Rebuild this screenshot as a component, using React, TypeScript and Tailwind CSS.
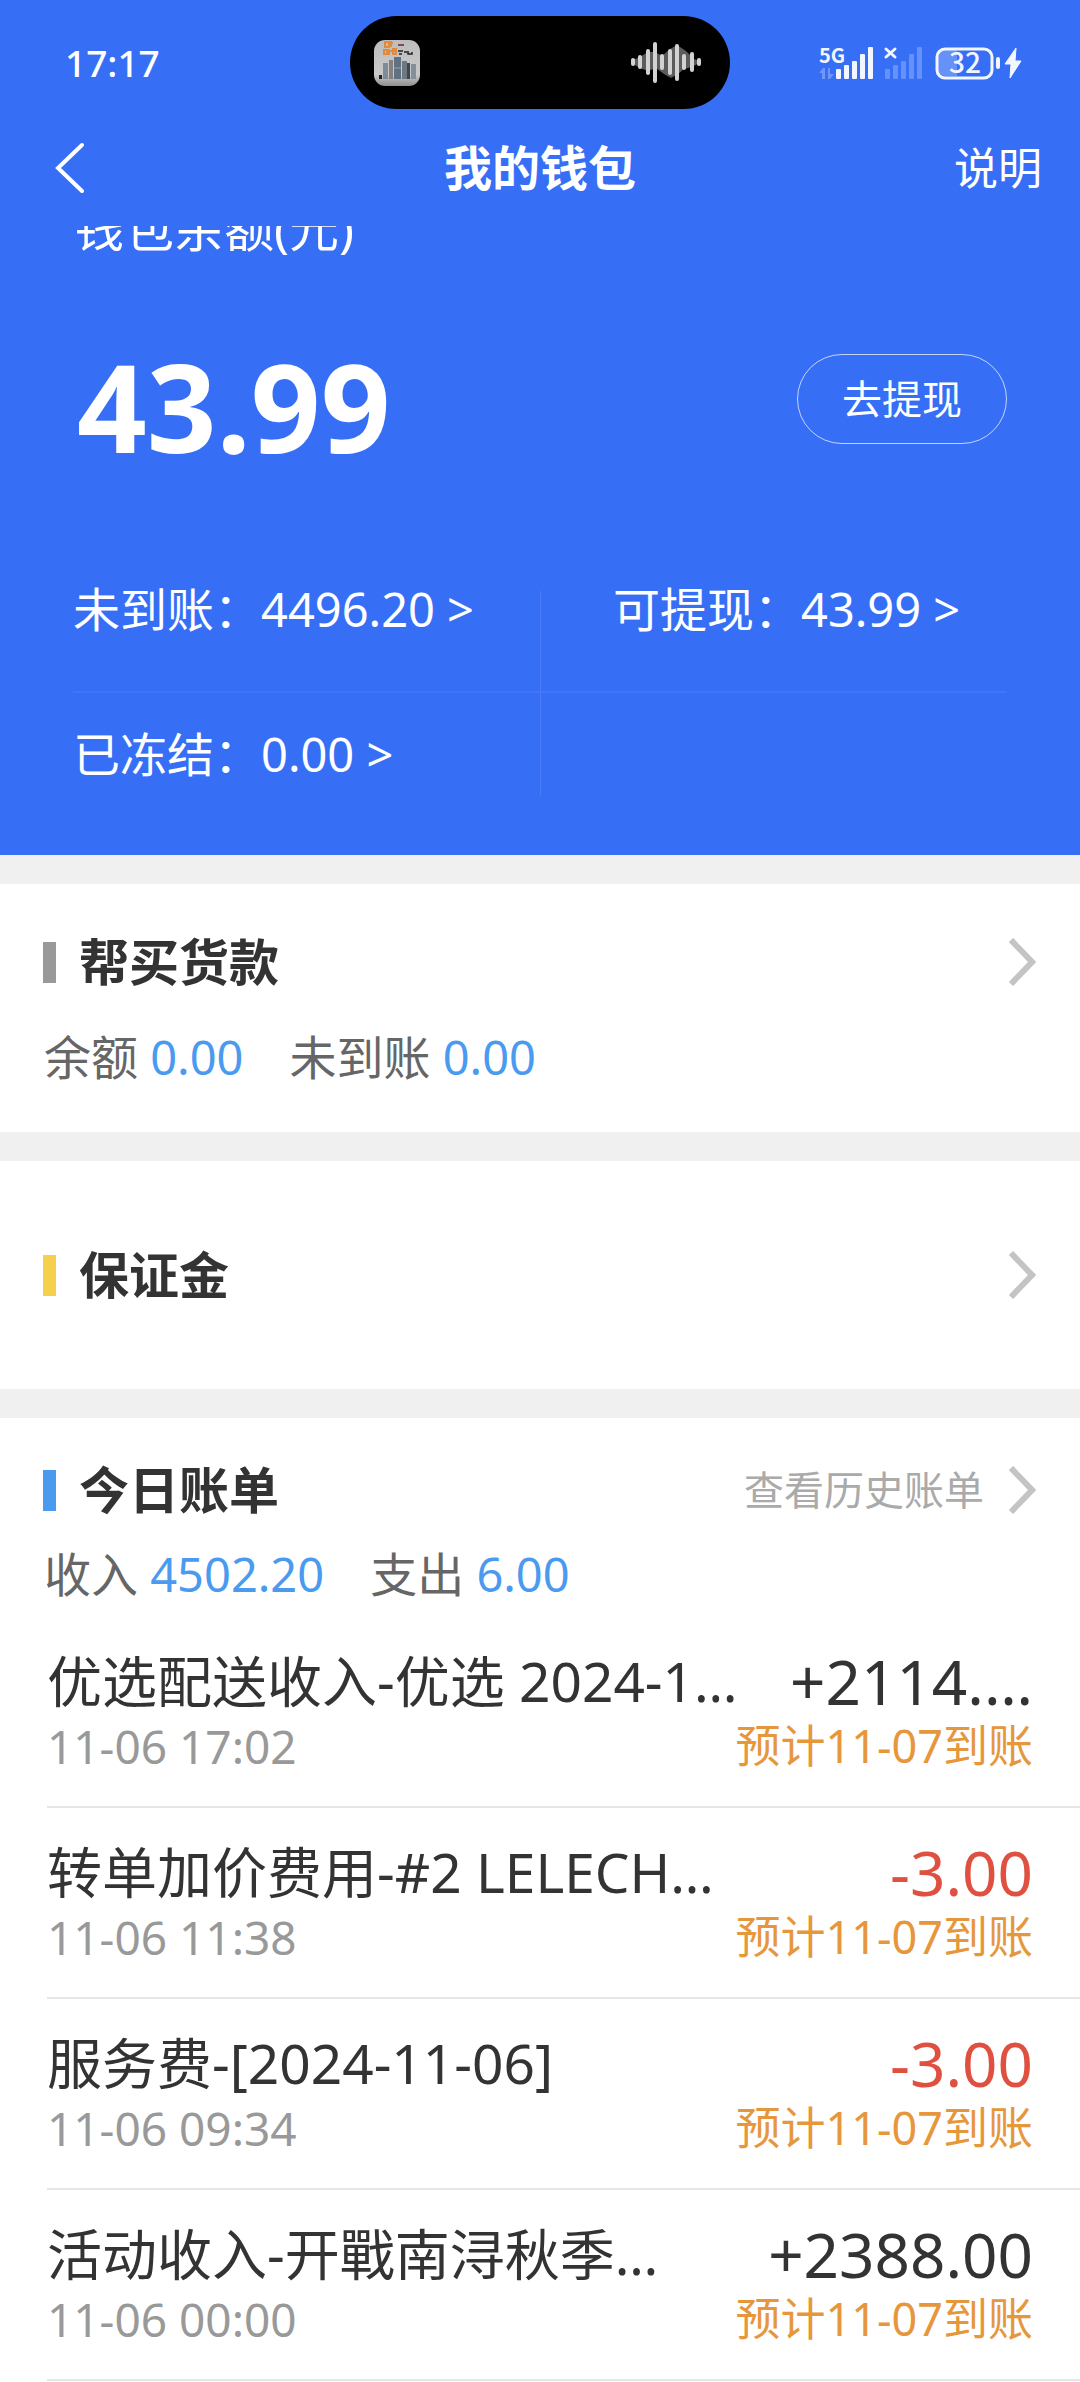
import React from "react";

type Bill = {
  title: string;
  time: string;
  amount: string;
  arrival: string;
};

const bills: Bill[] = [
  {
    title: "优选配送收入-优选 2024-1…",
    time: "11-06 17:02",
    amount: "+2114.…",
    arrival: "预计11-07到账",
  },
  {
    title: "转单加价费用-#2 LELECH…",
    time: "11-06 11:38",
    amount: "-3.00",
    arrival: "预计11-07到账",
  },
  {
    title: "服务费-[2024-11-06]",
    time: "11-06 09:34",
    amount: "-3.00",
    arrival: "预计11-07到账",
  },
  {
    title: "活动收入-开戰南浔秋季…",
    time: "11-06 00:00",
    amount: "+2388.00",
    arrival: "预计11-07到账",
  },
];

// [x, top, bottom] of every bar
const waveBars = [
  [3, 17, 25],
  [10, 14, 28],
  [18, 8, 34],
  [25, 1, 42],
  [32, 13, 29],
  [40, 8, 34],
  [47, 3, 40],
  [54, 13, 29],
  [62, 11, 31],
  [69, 17, 25],
];

const signalBars = [
  [0, 23],
  [8, 19],
  [16, 15],
  [24, 8],
  [32, 1],
];

function AppThumb() {
  return (
    <svg className="w-12 h-12" viewBox="0 0 48 48" aria-hidden="true">
      <defs>
        <linearGradient id="thumb" x1="0" y1="0" x2="0" y2="1">
          <stop offset="0" stopColor="#bdbdbd" />
          <stop offset="0.75" stopColor="#c9c9c9" />
          <stop offset="1" stopColor="#8f8f8f" />
        </linearGradient>
      </defs>
      <rect x="1" y="1" width="46" height="46" rx="11" fill="url(#thumb)" />
      <g stroke="#e08a3c" strokeWidth="2" fill="none">
        <path d="M12 3h4v5h-4zM18 2v6M17 4h3M11 11h3v4h-3zM16 10v6M15 12h4M20 10h3v5h-3zM20 12h3" />
      </g>
      <path d="M25 5h6v2h-6z" fill="#7d4a5c" />
      <path d="M25 12h5M26 15h3M31 13h3M35 12v3h4v-2" stroke="#222" strokeWidth="1.5" fill="none" />
      <g>
        <rect x="10" y="24" width="5" height="16" fill="#7f8b97" />
        <rect x="16" y="21" width="4" height="19" fill="#85807f" />
        <rect x="21" y="18" width="7" height="22" fill="#5f7283" />
        <rect x="29" y="22" width="5" height="18" fill="#6d7880" />
        <rect x="34" y="24" width="3" height="16" fill="#3f4850" />
        <rect x="38" y="25" width="5" height="15" fill="#83909a" />
        <rect x="6" y="36" width="3" height="4" fill="#222" />
        <path d="M21 29h7" stroke="#93a5b3" />
      </g>
    </svg>
  );
}

function Wave() {
  return (
    <svg className="w-[72px] h-[43px]" viewBox="0 0 72 43" aria-hidden="true">
      <path
        d="M3 19L10 16L18 11H25L32 15L40 8L47 4L56 10L64 18L69 20V22L62 26L54 28L48 33L41 37L34 33L26 27L18 30L10 27L3 23z"
        fill="#5c5c5c"
      />
      {waveBars.map(([x, top, bottom]) => (
        <rect key={x} x={x - 2} y={top} width="4" height={bottom - top} rx="2" fill="#d2d2d2" />
      ))}
    </svg>
  );
}

function StatusIcons() {
  return (
    <svg className="w-[204px] h-[34px] overflow-visible" viewBox="0 0 204 34" fill="#f2f6ff" aria-hidden="true">
      <text x="1" y="17" className="text-[20px] font-bold font-['Noto_Sans_CJK_SC',sans-serif]">
        5G
      </text>
      <path d="M1 27l4-5h2v11H4v-6zM10 22h2v6h4l-4 5h-2z" opacity="0.3" />
      {signalBars.map(([x, y]) => (
        <rect key={x} x={x + 18} y={y} width="5" height={33 - y} rx="1" />
      ))}
      <path d="M68 3l9 8M77 3l-9 8" stroke="#f2f6ff" strokeWidth="3" strokeLinecap="round" />
      {signalBars.map(([x, y]) => (
        <rect key={x} x={x + 67} y={y} width="5" height={33 - y} rx="1" opacity="0.25" />
      ))}
      <path d="M127 4h12v26h-12a7 7 0 0 1-7-7V11a7 7 0 0 1 7-7z" opacity="0.25" />
      <rect x="119" y="3" width="55" height="29" rx="8" fill="none" stroke="#f2f6ff" strokeWidth="3" />
      <text x="147" y="27" textAnchor="middle" className="text-[28px] font-medium font-['Noto_Sans_CJK_SC',sans-serif]">
        32
      </text>
      <rect x="178" y="11" width="4" height="12" rx="2" />
      <path d="M198 2l-11 16h6l-1 14 11-17h-6z" stroke="#f2f6ff" strokeLinejoin="round" />
    </svg>
  );
}

function Arrow() {
  return (
    <svg className="w-7 h-12" viewBox="0 0 28 48" fill="none" stroke="#c4c4c4" strokeWidth="6" aria-hidden="true">
      <path d="M3 2l21 22L3 46" />
    </svg>
  );
}

function SectionTitle({ bar, title, more }: { bar: string; title: string; more?: string }) {
  return (
    <a href="#" className="flex items-center pl-[43px] pr-11 h-16">
      <span className={`w-[13px] h-[41px] ${bar}`} />
      <h2 className="ml-[23px] flex-1 text-[50px] leading-[66px] font-bold text-[#333]">{title}</h2>
      {more && <span className="mr-6 text-[40px] leading-[66px] text-[#aaa]">{more}</span>}
      <Arrow />
    </a>
  );
}

function Totals({ items }: { items: string[][] }) {
  return (
    <p className="flex gap-[46px] pl-11 text-[47px] leading-[64px] text-[#666]">
      {items.map(([label, value]) => (
        <span key={label}>
          {label} <span className="text-[#4a9af0]">{value}</span>
        </span>
      ))}
    </p>
  );
}

export default function App() {
  return (
    <div
      lang="zh-CN"
      className="min-h-screen bg-white font-['Noto_Sans','Noto_Sans_CJK_SC',sans-serif]"
    >
      <header className="bg-[#366ff6] text-white">
        <div className="grid grid-cols-[1fr_380px_1fr] items-center pt-4">
          <span className="pl-[65px] text-[37px] leading-[48px] font-medium">17:17</span>
          <div className="flex items-center justify-between h-[93px] pl-[23px] pr-[28px] rounded-full bg-black">
            <AppThumb />
            <Wave />
          </div>
          <div className="flex justify-end pr-[58px]">
            <StatusIcons />
          </div>
        </div>
        <div className="grid grid-cols-[1fr_auto_1fr] items-center h-[117px] px-[38px]">
          <button aria-label="返回" className="ml-4 w-8">
            <svg className="w-8 h-[54px]" viewBox="0 0 32 54" fill="none" stroke="white" strokeWidth="4" strokeLinecap="round">
              <path d="M28 4L4 27l24 23" />
            </svg>
          </button>
          <h1 className="text-[48px] leading-[64px] font-bold">我的钱包</h1>
          <button className="justify-self-end text-[44px] leading-[64px]">说明</button>
        </div>
      </header>

      <section className="overflow-hidden h-[629px] px-[73px] bg-[#366ff6] text-white">
        {/* label is scrolled half way under the header */}
        <p className="-mt-[30px] pl-px text-[50px] leading-[64px]">钱包余额(元)</p>
        <div className="flex items-center justify-between mt-[82px] h-[128px]">
          <span className="pl-1 text-[122px] leading-[128px] font-bold">43.99</span>
          <button className="w-[210px] h-[90px] rounded-full border border-white/70 text-[40px] -mt-[14px]">
            去提现
          </button>
        </div>
        <div className="grid grid-cols-2 mt-[121px] text-[47px] leading-[36px]">
          <a href="#" className="pb-16 border-b-2 border-b-white/5">
            未到账：4496.20 &gt;
          </a>
          <a href="#" className="pl-[72px] pb-16 border-b-2 border-b-white/5 border-l border-l-white/10">
            可提现：43.99 &gt;
          </a>
          <a href="#" className="pt-[43px] pb-6">
            已冻结：0.00 &gt;
          </a>
          <div className="border-l border-l-white/10" />
        </div>
      </section>

      <main className="bg-[#f0f0f0]">
        <section className="border-t-[29px] border-[#f0f0f0] bg-white pb-[43px]">
          <div className="pt-[46px]">
            <SectionTitle bar="bg-[#999]" title="帮买货款" />
          </div>
          <div className="pt-[31px]">
            <Totals items={[["余额", "0.00"], ["未到账", "0.00"]]} />
          </div>
        </section>

        <section className="border-t-[29px] border-[#f0f0f0] bg-white py-[82px]">
          <SectionTitle bar="bg-[#f5d04c]" title="保证金" />
        </section>

        <section className="border-t-[29px] border-[#f0f0f0] bg-white pt-10">
          <SectionTitle bar="bg-[#4a9af0]" title="今日账单" more="查看历史账单" />
          <div className="pt-5 pb-[11px]">
            <Totals items={[["收入", "4502.20"], ["支出", "6.00"]]} />
          </div>
          <ul className="pl-[47px]">
            {bills.map((bill) => (
              <li key={bill.time} className="pt-7 pb-8 pr-[47px] border-b-2 border-[#e6e6e6]">
                <div className="flex justify-between h-[73px] leading-[72px] whitespace-nowrap">
                  <span className="text-[55px] text-[#333]">{bill.title}</span>
                  <span
                    className={`text-[62px] ${
                      bill.amount.startsWith("-") ? "text-[#e05040]" : "text-[#333]"
                    }`}
                  >
                    {bill.amount}
                  </span>
                </div>
                <div className="flex justify-between leading-[56px]">
                  <span className="text-[46px] text-[#999]">{bill.time}</span>
                  <span className="text-[45px] text-[#e6973c]">{bill.arrival}</span>
                </div>
              </li>
            ))}
          </ul>
        </section>
      </main>
    </div>
  );
}
